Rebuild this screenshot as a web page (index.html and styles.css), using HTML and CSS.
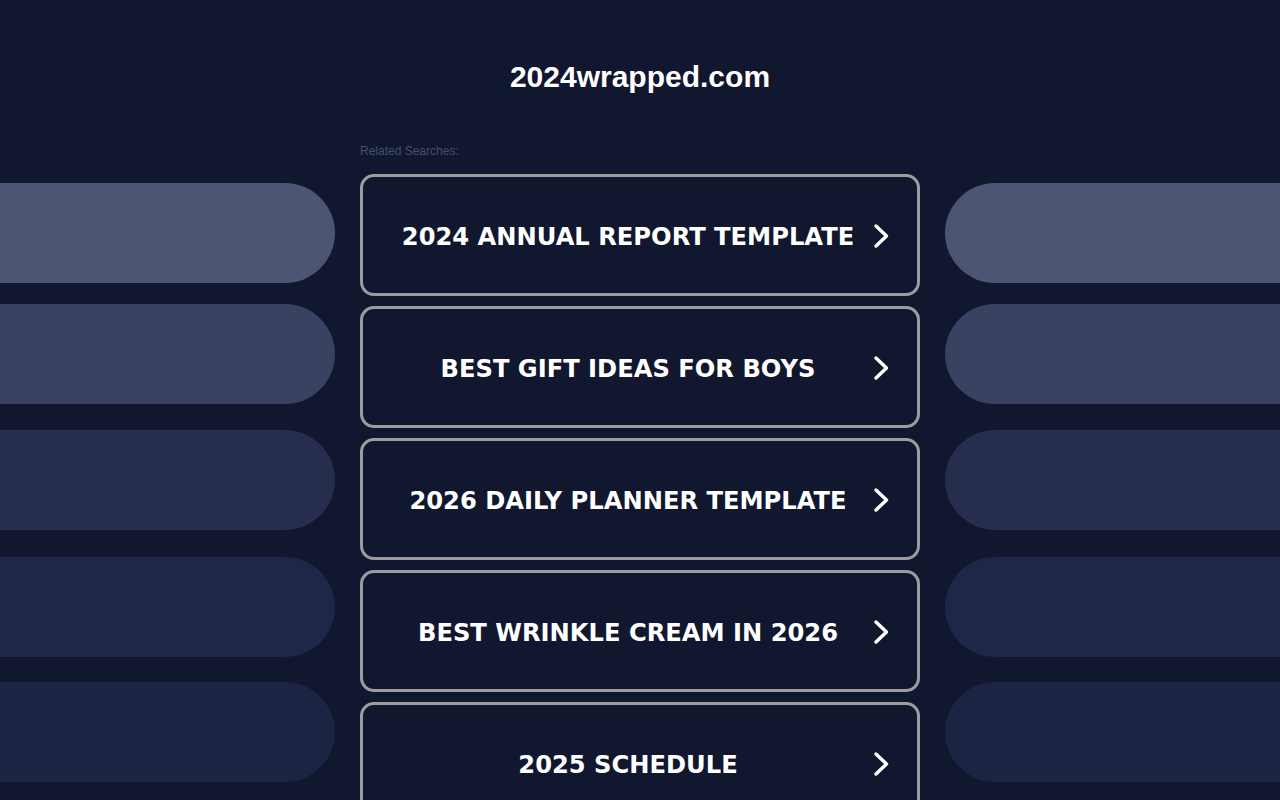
FILE: index.html
```html
<!DOCTYPE html>
<html lang="en">

<head>
    <meta charset="UTF-8">
    <meta name="viewport" content="width=device-width, initial-scale=1.0">
    <title>2024wrapped.com</title>
    <link rel="stylesheet" href="styles.css">
</head>

<body>
    <div class="header">2024wrapped.com</div>

    <div class="layout">
        <!-- Decorative pills, left -->
        <div class="side side-left">
            <div class="pill p1"></div>
            <div class="pill p2"></div>
            <div class="pill p3"></div>
            <div class="pill p4"></div>
            <div class="pill p5"></div>
        </div>

        <div class="main">
            <div class="related">Related Searches:</div>
            <a class="link" href="#"><span class="label">2024 ANNUAL REPORT TEMPLATE</span><svg class="chev" viewBox="0 0 20 26"><path d="M4 3 L14.5 13 L4 23" /></svg></a>
            <a class="link" href="#"><span class="label">BEST GIFT IDEAS FOR BOYS</span><svg class="chev" viewBox="0 0 20 26"><path d="M4 3 L14.5 13 L4 23" /></svg></a>
            <a class="link" href="#"><span class="label">2026 DAILY PLANNER TEMPLATE</span><svg class="chev" viewBox="0 0 20 26"><path d="M4 3 L14.5 13 L4 23" /></svg></a>
            <a class="link" href="#"><span class="label">BEST WRINKLE CREAM IN 2026</span><svg class="chev" viewBox="0 0 20 26"><path d="M4 3 L14.5 13 L4 23" /></svg></a>
            <a class="link" href="#"><span class="label">2025 SCHEDULE</span><svg class="chev" viewBox="0 0 20 26"><path d="M4 3 L14.5 13 L4 23" /></svg></a>
        </div>

        <!-- Decorative pills, right -->
        <div class="side side-right">
            <div class="pill p1"></div>
            <div class="pill p2"></div>
            <div class="pill p3"></div>
            <div class="pill p4"></div>
            <div class="pill p5"></div>
        </div>
    </div>
</body>

</html>
```

FILE: styles.css
```css
body {
    margin: 0;
    padding: 0;
    background: #11172e;
    font-family: "Liberation Sans", Arial, sans-serif;
    color: #fff;
    overflow: hidden;
    height: 800px;
}

.header {
    text-align: center;
    font-size: 30px;
    font-weight: bold;
    padding-top: 59px;
    height: 36px;
    line-height: 36px;
}

.layout {
    display: grid;
    grid-template-columns: 335px 560px 335px;
    column-gap: 25px;
    margin-top: 49px;
}

.side {
    display: flex;
    flex-direction: column;
    padding-top: 39px;
}

.pill {
    height: 100px;
    flex-shrink: 0;
}

.side-left .pill {
    border-radius: 0 50px 50px 0;
}

.side-right .pill {
    border-radius: 50px 0 0 50px;
}

.pill.p1 {
    background: #4c5572;
}

.pill.p2 {
    margin-top: 21px;
    background: #3a4261;
}

.pill.p3 {
    margin-top: 26px;
    background: #272e4d;
}

.pill.p4 {
    margin-top: 27px;
    background: #1e2747;
}

.pill.p5 {
    margin-top: 25px;
    background: #1c2444;
}

.main {
    display: flex;
    flex-direction: column;
    gap: 10px;
}

.related {
    font-size: 12px;
    color: #44506f;
    height: 14px;
    line-height: 14px;
    margin-bottom: 6px;
}

.link {
    position: relative;
    display: flex;
    align-items: center;
    justify-content: center;
    height: 112px;
    flex-shrink: 0;
    border: 3px solid #9c9c9f;
    border-radius: 14px;
    padding: 4px 24px 0 0;
    text-decoration: none;
    color: #fff;
    font-family: "DejaVu Sans", Verdana, sans-serif;
    font-weight: bold;
    font-size: 24.2px;
}

.label {
    white-space: nowrap;
}

.chev {
    position: absolute;
    right: 25px;
    top: 46px;
    width: 20px;
    height: 26px;
}

.chev path {
    fill: none;
    stroke: #fff;
    stroke-width: 3.4;
    stroke-linecap: round;
    stroke-linejoin: round;
}
```
